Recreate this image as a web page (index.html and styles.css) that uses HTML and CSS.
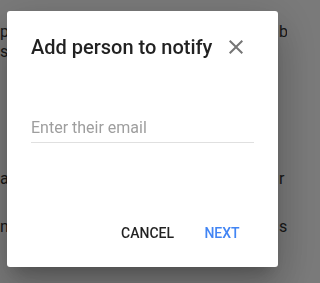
FILE: index.html
```html
<!DOCTYPE html>
<html>
<head>
<meta charset="utf-8">
<link rel="stylesheet" href="styles.css">
</head>
<body>
<div class="page">
  <div class="row r1"><span class="left">pe</span><span class="right">be</span></div>
  <div class="row r2"><span class="left">so</span><span class="right"></span></div>
  <div class="row r3"><span class="left">al</span><span class="right">r y</span></div>
  <div class="row r4"><span class="left">nc</span><span class="right">s</span></div>
</div>
<div class="overlay">
  <div class="dialog">
    <div class="header">
      <h1 class="title">Add person to notify</h1>
      <svg class="close" width="24" height="24" viewBox="0 0 24 24"><path d="M19 6.41L17.59 5 12 10.59 6.41 5 5 6.41 10.59 12 5 17.59 6.41 19 12 13.41 17.59 19 19 17.59 13.41 12z" fill="#757575"/></svg>
    </div>
    <div class="field">
      <input class="email" type="text" placeholder="Enter their email">
    </div>
    <div class="actions">
      <button class="btn cancel">Cancel</button>
      <button class="btn next">Next</button>
    </div>
  </div>
</div>
</body>
</html>
```
FILE: styles.css
```css
html, body {
  margin: 0;
  padding: 0;
  width: 287px;
  height: 283px;
  overflow: hidden;
  background: #fff;
  font-family: Roboto, "Liberation Sans", sans-serif;
}
.page {
  width: 287px;
  overflow: hidden;
  padding-top: 21.5px;
  color: #333;
  font-size: 16px;
  line-height: 20px;
}
.row {
  display: grid;
  grid-template-columns: 7px 272px 8px;
  height: 20px;
  white-space: nowrap;
}
.left { overflow: hidden; }
.right { grid-column: 3; overflow: hidden; }
.r3 { margin-top: 107px; }
.r4 { margin-top: 28px; }
.overlay {
  position: fixed;
  inset: 0;
  background: rgba(0, 0, 0, 0.52);
  padding: 11px 0 0 7px;
}
.dialog {
  width: 271px;
  height: 256px;
  box-sizing: border-box;
  background: #fff;
  border-radius: 3px;
  padding: 20px 24px 16px 24px;
  display: flex;
  flex-direction: column;
  box-shadow: 0 11px 15px -7px rgba(0,0,0,.2), 0 24px 38px 3px rgba(0,0,0,.14), 0 9px 46px 8px rgba(0,0,0,.12);
}
.header {
  display: flex;
  align-items: center;
  justify-content: space-between;
  height: 32px;
  padding-right: 6px;
}
.title {
  margin: 0;
  font-size: 20px;
  font-weight: 500;
  line-height: 32px;
  color: rgba(0,0,0,.87);
}
.close { display: block; }
.field { margin-top: 52px; }
.email {
  display: block;
  width: 100%;
  box-sizing: border-box;
  border: none;
  border-bottom: 1px solid #e0e0e0;
  outline: none;
  padding: 0 0 3px 0;
  margin: 0;
  height: 28px;
  font-family: Roboto, "Liberation Sans", sans-serif;
  font-size: 16px;
  line-height: 24px;
  color: rgba(0,0,0,.87);
  background: transparent;
}
.email::placeholder { color: #9e9e9e; }
.actions {
  margin-top: auto;
  display: flex;
  justify-content: flex-end;
  gap: 8px;
}
.btn {
  min-width: 64px;
  height: 36px;
  padding: 0 8px;
  border: none;
  background: transparent;
  font-family: Roboto, "Liberation Sans", sans-serif;
  font-size: 14px;
  font-weight: 500;
  text-transform: uppercase;
  letter-spacing: 0;
  cursor: pointer;
}
.cancel { color: rgba(0,0,0,.87); }
.next { color: #4285f4; }
```
